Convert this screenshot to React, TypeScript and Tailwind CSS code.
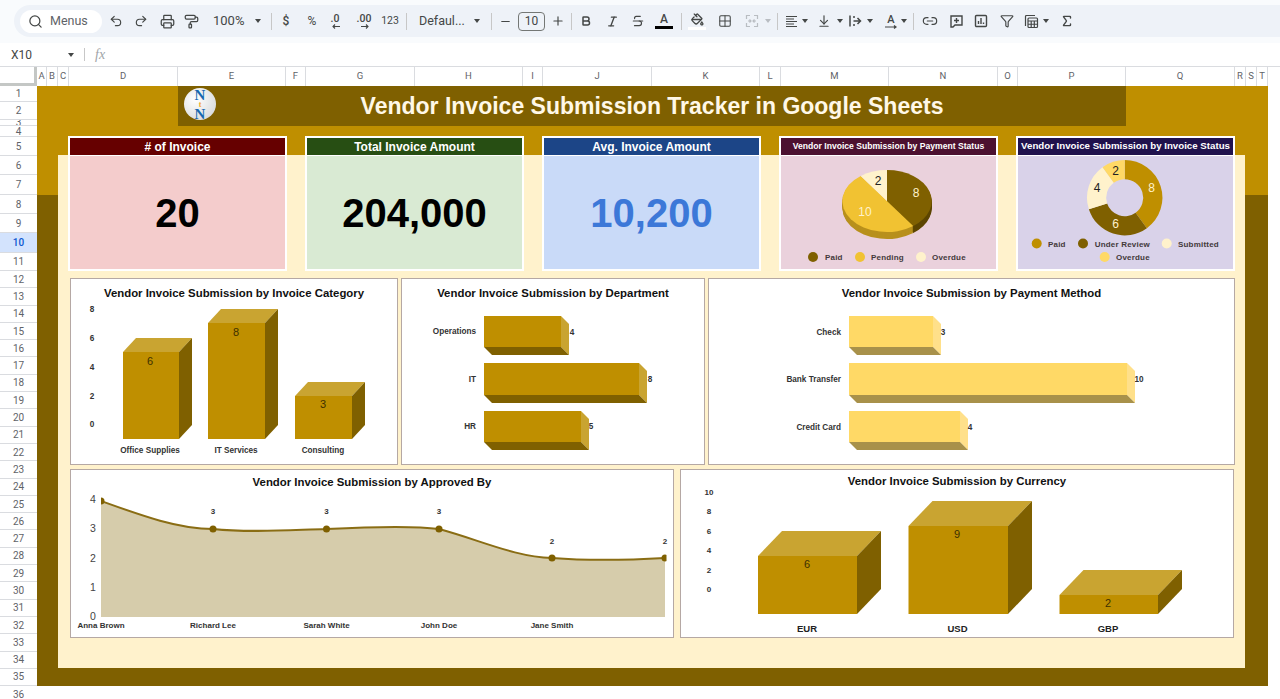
import React from 'react';
import {
  ArrowDownToLine,
  Bold,
  Filter,
  Grid2x2,
  Italic,
  Link2,
  Minus,
  PaintBucket,
  PaintRoller,
  Plus,
  Printer,
  Redo2,
  Search,
  Sigma,
  Strikethrough,
  Undo2,
} from 'lucide-react';

const columns = [
  { name: 'A', w: 'w-[10px]' },
  { name: 'B', w: 'w-[11px]' },
  { name: 'C', w: 'w-[11px]' },
  { name: 'D', w: 'w-[109px]' },
  { name: 'E', w: 'w-[108px]' },
  { name: 'F', w: 'w-[20px]' },
  { name: 'G', w: 'w-[109px]' },
  { name: 'H', w: 'w-[108px]' },
  { name: 'I', w: 'w-[20px]' },
  { name: 'J', w: 'w-[109px]' },
  { name: 'K', w: 'w-[108px]' },
  { name: 'L', w: 'w-[21px]' },
  { name: 'M', w: 'w-[108px]' },
  { name: 'N', w: 'w-[109px]' },
  { name: 'O', w: 'w-[20px]' },
  { name: 'P', w: 'w-[108px]' },
  { name: 'Q', w: 'w-[109px]' },
  { name: 'R', w: 'w-[11px]' },
  { name: 'S', w: 'w-[11px]' },
  { name: 'T', w: 'w-[11px]' },
];

const topRows = [
  'h-[16px]',
  'h-[18px]',
  'h-[6px]',
  'h-[11px]',
  'h-[19px]',
  'h-[19px]',
  'h-[20px]',
  'h-[19px]',
  'h-[19px]',
  'h-[20px]',
  'h-[18px]',
];

const Caret = ({ className = '' }: { className?: string }) => (
  <span className={`w-0 h-0 border-x-[3.5px] border-x-transparent border-t-[4px] border-t-[#444746] ${className}`} />
);

const Slot = ({ className = '', children }: { className?: string; children: React.ReactNode }) => (
  <div className={`w-6 h-6 flex items-center justify-center shrink-0 text-[#444746] ${className}`}>{children}</div>
);

const Sep = ({ className = '' }: { className?: string }) => (
  <div className={`w-px h-[17px] bg-[#c7c7c7] shrink-0 ${className}`} />
);

const Toolbar = () => (
  <div className="h-[43px] pt-[5px] pl-[14px] bg-[#f9fbfd]">
    <div className="h-8 flex items-center pl-[6px] bg-[#eef2f8] rounded-l-[16px] text-[#444746] font-['Roboto',sans-serif]">
      <div className="w-[82px] h-[23px] rounded-full bg-white flex items-center pl-[8px] shrink-0">
        <Search size={15} strokeWidth={2} />
        <span className="ml-[7px] text-[12.5px] text-[#5f6368]">Menus</span>
      </div>
      <Slot className="ml-[2px]"><Undo2 size={14} strokeWidth={2} /></Slot>
      <Slot className="ml-[1px]"><Redo2 size={14} strokeWidth={2} /></Slot>
      <Slot className="ml-[2px]"><Printer size={15} strokeWidth={2} /></Slot>
      <Slot><PaintRoller size={15} strokeWidth={2} /></Slot>
      <span className="ml-[10px] w-[42px] text-[13px]">100%</span>
      <Caret />
      <Sep className="ml-[10px]" />
      <Slot className="ml-[2px] text-[12px] font-medium">$</Slot>
      <Slot className="ml-[2px] text-[12px]">%</Slot>
      <Slot className="ml-[-1px] relative">
        <span className="text-[10.5px] font-medium mb-[5px]">.0</span>
        <svg className="absolute left-[9px] top-[15px]" width="8" height="5" viewBox="0 0 8 5" fill="none" stroke="currentColor" strokeWidth="1.1">
          <path d="M8 2.500H1M3 .5l-2 2 2 2" />
        </svg>
      </Slot>
      <Slot className="ml-[5px] relative">
        <span className="text-[10.5px] font-medium mb-[5px]">.00</span>
        <svg className="absolute left-[9px] top-[15px]" width="8" height="5" viewBox="0 0 8 5" fill="none" stroke="currentColor" strokeWidth="1.1">
          <path d="M0 2.500h7M5 .5l2 2-2 2" />
        </svg>
      </Slot>
      <Slot className="ml-[2px] text-[10.5px]">123</Slot>
      <Sep className="ml-[4px]" />
      <span className="ml-[12px] w-[52px] text-[12.5px] whitespace-nowrap">Defaul...</span>
      <Caret className="ml-[3px]" />
      <Sep className="ml-[11px]" />
      <Slot className="ml-[1px]"><Minus size={13} strokeWidth={2} /></Slot>
      <div className="ml-[1px] w-[27px] h-[19px] rounded-[4px] border border-[#747775] flex items-center justify-center text-[12px] shrink-0">10</div>
      <Slot className="ml-[1px]"><Plus size={14} strokeWidth={2} /></Slot>
      <Sep className="ml-[1px]" />
      <Slot className="ml-[2px]"><Bold size={12} strokeWidth={3} /></Slot>
      <Slot className="ml-[2px]"><Italic size={13} strokeWidth={2.5} /></Slot>
      <Slot className="ml-[2px]"><Strikethrough size={14} strokeWidth={2} /></Slot>
      <Slot className="ml-[2px] flex-col">
        <span className="text-[12px] leading-[13px] font-medium">A</span>
        <span className="w-[18px] h-[3px] bg-black" />
      </Slot>
      <Sep className="ml-[5px]" />
      <Slot className="ml-[3px] flex-col">
        <PaintBucket size={13} strokeWidth={2.4} />
        <span className="mt-[1px] w-[18px] h-[3px] bg-white" />
      </Slot>
      <Slot className="ml-[4px]"><Grid2x2 size={14} strokeWidth={1.8} /></Slot>
      <Slot className="ml-[3px] text-[#b9bdc2]">
        <svg width="14" height="14" viewBox="0 0 14 14" fill="none" stroke="currentColor" strokeWidth="1.2">
          <path d="M1.500 5V1.500H5M9 1.500h3.500V5M1.500 9v3.500H5M9 12.500h3.500V9M3 7h3M4.500 5.500 6 7 4.500 8.500M11 7H8M9.500 5.500 8 7l1.500 1.500" />
        </svg>
      </Slot>
      <span className="ml-[1px] w-0 h-0 border-x-[3.5px] border-x-transparent border-t-[4px] border-t-[#b9bdc2]" />
      <Sep className="ml-[6px]" />
      <Slot className="ml-[1px]">
        <svg width="13" height="13" viewBox="0 0 13 13" fill="none" stroke="currentColor" strokeWidth="1.1">
          <path d="M1 1.500h11M1 4h8M1 6.500h11M1 9h8M1 11.500h11" />
        </svg>
      </Slot>
      <Caret className="ml-[-1px]" />
      <Slot className="ml-[4px]"><ArrowDownToLine size={14} strokeWidth={2} /></Slot>
      <Caret className="ml-[1px]" />
      <Slot>
        <svg width="14" height="14" viewBox="0 0 14 14" fill="none" stroke="currentColor" strokeWidth="1.5">
          <path d="M2 1.500v11M5.500 7h7M9.500 4l3 3-3 3M6 2v2M6 10v2" />
        </svg>
      </Slot>
      <Caret />
      <Slot className="ml-[6px] flex-col">
        <span className="text-[11px] leading-[11px] font-medium">A</span>
        <svg width="14" height="4" viewBox="0 0 14 4" fill="none" stroke="currentColor" strokeWidth="1.2">
          <path d="M1 2h11M10 .5l2 1.500-2 1.500" />
        </svg>
      </Slot>
      <Caret className="ml-[-2px]" />
      <Sep className="ml-[6px]" />
      <Slot className="ml-[4px]"><Link2 size={16} strokeWidth={1.8} /></Slot>
      <Slot className="ml-[2px]">
        <svg width="15" height="15" viewBox="0 0 15 15" fill="none" stroke="currentColor" strokeWidth="1.4">
          <path d="M2 2h11v9H6l-2 2H2zM7.500 4v5M5 6.500h5" />
        </svg>
      </Slot>
      <Slot className="ml-[1px]">
        <svg width="14" height="14" viewBox="0 0 14 14" fill="none" stroke="currentColor" strokeWidth="1.4">
          <rect x="1.500" y="1.500" width="11" height="11" rx="1" />
          <path d="M4.500 10V7M7 10V4M9.500 10V8.500" />
        </svg>
      </Slot>
      <Slot className="ml-[2px]"><Filter size={14} strokeWidth={2} /></Slot>
      <Slot>
        <svg width="15" height="15" viewBox="0 0 15 15" fill="none" stroke="currentColor" strokeWidth="1.2">
          <path d="M1.500 12V2.500a1 1 0 0 1 1-1H11" />
          <rect x="4" y="4" width="9.500" height="9.500" rx="1" />
          <path d="M4 7h9.500M4 10.250h9.500M7.200 7v6.500M10.300 7v6.500" />
        </svg>
      </Slot>
      <Caret />
      <Slot className="ml-[6px]"><Sigma size={14} strokeWidth={2.4} /></Slot>
    </div>
  </div>
);

const FormulaBar = () => (
  <div className="h-[23px] flex items-center bg-white text-[#444746] font-['Roboto',sans-serif]">
    <span className="ml-[11px] w-[57px] text-[12px]">X10</span>
    <Caret />
    <div className="ml-[10px] w-px h-[13px] bg-[#c7c7c7]" />
    <span className="ml-[10px] font-['Liberation_Serif',serif] italic text-[14px] text-[#a0a4a8]">fx</span>
  </div>
);

const ColumnHeader = () => (
  <div className="h-[20px] flex bg-white border-t border-[#dadce0] text-[9.5px] text-[#5f6368] font-['Roboto',sans-serif]">
    <div className="w-[37px] h-full bg-white border-r-[3px] border-b-[3px] border-[#c4c7c5]" />
    {columns.map((col) => (
      <div key={col.name} className={`${col.w} flex items-center justify-center border-r border-[#dadce0]`}>
        {col.name}
      </div>
    ))}
  </div>
);

const RowHeader = () => {
  const extra = Array.from({ length: 25 }, (_, i) => i + 12);
  const cell = 'flex items-center justify-center border-b border-[#dadce0] overflow-hidden shrink-0';
  return (
    <div className="w-[37px] shrink-0 bg-white text-[10px] text-[#5f6368] font-['Roboto',sans-serif]">
      {topRows.map((h, i) => (
        <div key={i} className={`${h} ${cell} ${i === 9 ? 'bg-[#d3e3fd] text-[#0b57d0] font-medium' : ''}`}>
          {i + 1}
        </div>
      ))}
      {extra.map((n) => (
        <div key={n} className={`h-[17.3px] ${cell}`}>
          {n}
        </div>
      ))}
    </div>
  );
};

const Kpi = ({ title, value, head, body, valueClass }: { title: string; value: string; head: string; body: string; valueClass: string }) => (
  <div className="w-[219px] h-[135px] border-2 border-white flex flex-col bg-white">
    <div className={`h-[17px] flex items-center justify-center text-white text-[12px] font-bold ${head}`}>{title}</div>
    <div className={`mt-[1px] flex-1 flex items-center justify-center text-[40px] font-bold ${body} ${valueClass}`}>{value}</div>
  </div>
);

const slice = (cx: number, cy: number, rx: number, ry: number, from: number, to: number) => {
  const p = (a: number) => {
    const r = (a * Math.PI) / 180;
    return `${cx + rx * Math.sin(r)} ${cy - ry * Math.cos(r)}`;
  };
  return `M${cx} ${cy}L${p(from)}A${rx} ${ry} 0 ${to - from > 180 ? 1 : 0} 1 ${p(to)}Z`;
};

const ring = (cx: number, cy: number, r1: number, r2: number, from: number, to: number) => {
  const p = (a: number, r: number) => {
    const t = (a * Math.PI) / 180;
    return `${cx + r * Math.sin(t)} ${cy - r * Math.cos(t)}`;
  };
  const big = to - from > 180 ? 1 : 0;
  return `M${p(from, r1)}A${r1} ${r1} 0 ${big} 1 ${p(to, r1)}L${p(to, r2)}A${r2} ${r2} 0 ${big} 0 ${p(from, r2)}Z`;
};

const Legend = ({ x, y, tx, color, label }: { x: number; y: number; tx: number; color: string; label: string }) => (
  <g>
    <circle cx={x} cy={y} r="5" fill={color} />
    <text x={tx} y={y + 3} fontSize="8" fontWeight="700" fill="#43393a" letterSpacing=".2">
      {label}
    </text>
  </g>
);

const depth = [7, 6, 5, 4, 3, 2, 1];

const PieCard = () => (
  <div className="w-[219px] h-[135px] border-2 border-white flex flex-col bg-white">
    <div className="h-[17px] flex items-center justify-center text-white text-[8.6px] font-bold bg-[#4c1130] whitespace-nowrap">
      Vendor Invoice Submission by Payment Status
    </div>
    <svg className="mt-[1px] block bg-[#ead1dc]" width="215" height="113" viewBox="782 156 215 113">
      {depth.map((d) => (
        <g key={d}>
          <path d={slice(888, 201 + d, 44.7, 31, 0, 144)} fill="#5c4500" />
          <path d={slice(888, 201 + d, 44.7, 31, 144, 324)} fill="#b8901c" />
        </g>
      ))}
      <path d={slice(888, 201, 44.7, 31, 0, 144)} fill="#7f6000" />
      <path d={slice(888, 201, 44.7, 31, 144, 324)} fill="#f1c232" />
      <path d={slice(888, 201, 44.7, 31, 324, 360)} fill="#fff2cc" />
      <text x="917" y="197" textAnchor="middle" fontSize="12" fill="#fff2cc">8</text>
      <text x="866" y="216" textAnchor="middle" fontSize="12" fill="#fff2cc">10</text>
      <text x="879" y="185" textAnchor="middle" fontSize="12" fill="#222">2</text>
      <Legend x={814} y={257} tx={826} color="#7f6000" label="Paid" />
      <Legend x={861} y={257} tx={872} color="#f1c232" label="Pending" />
      <Legend x={922} y={257} tx={933} color="#fff2cc" label="Overdue" />
    </svg>
  </div>
);

const DonutCard = () => (
  <div className="w-[219px] h-[135px] border-2 border-white flex flex-col bg-white">
    <div className="h-[17px] flex items-center justify-center text-white text-[9.7px] font-bold bg-[#20124d] whitespace-nowrap">
      Vendor Invoice Submission by Invoice Status
    </div>
    <svg className="mt-[1px] block bg-[#d9d2e9]" width="215" height="113" viewBox="1019 156 215 113">
      <path d={ring(1125.7, 197.7, 37.7, 18.5, 0, 144)} fill="#bf8f00" />
      <path d={ring(1125.7, 197.7, 37.7, 18.5, 144, 252)} fill="#7f6000" />
      <path d={ring(1125.7, 197.7, 37.7, 18.5, 252, 324)} fill="#fff2cc" />
      <path d={ring(1125.7, 197.7, 37.7, 18.5, 324, 360)} fill="#ffd966" />
      <text x="1152.700" y="192" textAnchor="middle" fontSize="12" fill="#fff2cc">8</text>
      <text x="1116.700" y="228" textAnchor="middle" fontSize="12" fill="#fff2cc">6</text>
      <text x="1098" y="192" textAnchor="middle" fontSize="12" fill="#222">4</text>
      <text x="1116.700" y="175" textAnchor="middle" fontSize="12" fill="#222">2</text>
      <Legend x={1037.700} y={243.500} tx={1049} color="#bf8f00" label="Paid" />
      <Legend x={1084} y={243.500} tx={1095.700} color="#7f6000" label="Under Review" />
      <Legend x={1167.700} y={243.500} tx={1179} color="#fff2cc" label="Submitted" />
      <Legend x={1105.700} y={257} tx={1117} color="#ffd966" label="Overdue" />
    </svg>
  </div>
);

const Column3D = ({ x, y, w, bottom, dx, dy }: { x: number; y: number; w: number; bottom: number; dx: number; dy: number }) => (
  <g>
    <polygon points={`${x},${y} ${x + dx},${y - dy} ${x + w + dx},${y - dy} ${x + w},${y}`} fill="#c9a431" />
    <polygon points={`${x + w},${y} ${x + w + dx},${y - dy} ${x + w + dx},${bottom - dy} ${x + w},${bottom}`} fill="#7f6000" />
    <rect x={x} y={y} width={w} height={bottom - y} fill="#bf8f00" />
  </g>
);

const HBar = ({ x, y, w, h, front, side, under }: { x: number; y: number; w: number; h: number; front: string; side: string; under: string }) => (
  <g>
    <polygon points={`${x + w},${y} ${x + w + 8},${y + 8} ${x + w + 8},${y + h + 8} ${x + w},${y + h}`} fill={side} />
    <polygon points={`${x},${y + h} ${x + 8},${y + h + 8} ${x + w + 8},${y + h + 8} ${x + w},${y + h}`} fill={under} />
    <rect x={x} y={y} width={w} height={h} fill={front} />
  </g>
);

const Card = ({ title, w, h, head, children }: { title: string; w: string; h: string; head: string; children: React.ReactNode }) => (
  <div className={`${w} ${h} bg-white border border-[#b5a8a4] flex flex-col shrink-0`}>
    <div className={`${head} flex items-center justify-center font-bold text-[#111] text-[11.4px] shrink-0`}>{title}</div>
    {children}
  </div>
);

const CategoryChart = () => (
  <svg width="326" height="160" viewBox="71 304 326 160" className="block">
    {[['8', 309], ['6', 338], ['4', 367], ['2', 396], ['0', 424]].map(([t, y]) => (
      <text key={t} x="92" y={Number(y) + 3} textAnchor="middle" fontSize="8.200" fontWeight="700" fill="#333">{t}</text>
    ))}
    <Column3D x={123} y={352} w={56} bottom={439} dx={13} dy={14} />
    <Column3D x={208} y={323} w={57} bottom={439} dx={13} dy={14} />
    <Column3D x={295} y={396} w={57} bottom={439} dx={13} dy={14} />
    <text x="150" y="365" textAnchor="middle" fontSize="11" fill="#3d3000">6</text>
    <text x="236" y="336" textAnchor="middle" fontSize="11" fill="#3d3000">8</text>
    <text x="323" y="408" textAnchor="middle" fontSize="11" fill="#3d3000">3</text>
    <text x="150" y="453" textAnchor="middle" fontSize="8.200" fontWeight="700" fill="#333">Office Supplies</text>
    <text x="236" y="453" textAnchor="middle" fontSize="8.200" fontWeight="700" fill="#333">IT Services</text>
    <text x="323" y="453" textAnchor="middle" fontSize="8.200" fontWeight="700" fill="#333">Consulting</text>
  </svg>
);

const DepartmentChart = () => (
  <svg width="302" height="160" viewBox="402 304 302 160" className="block">
    <HBar x={484} y={316} w={77} h={31} front="#bf8f00" side="#c9a431" under="#7f6000" />
    <HBar x={484} y={363} w={155} h={32} front="#bf8f00" side="#c9a431" under="#7f6000" />
    <HBar x={484} y={411} w={97} h={31} front="#bf8f00" side="#c9a431" under="#7f6000" />
    <g fontSize="8.200" fontWeight="700" fill="#333">
      <text x="476" y="334" textAnchor="end">Operations</text>
      <text x="476" y="382" textAnchor="end">IT</text>
      <text x="476" y="429" textAnchor="end">HR</text>
      <text x="572" y="335" textAnchor="middle">4</text>
      <text x="650" y="382" textAnchor="middle">8</text>
      <text x="591" y="429" textAnchor="middle">5</text>
    </g>
  </svg>
);

const MethodChart = () => (
  <svg width="525" height="160" viewBox="709 304 525 160" className="block">
    <HBar x={849} y={316} w={84} h={31} front="#ffd966" side="#ffe08a" under="#a8914a" />
    <HBar x={849} y={363} w={278} h={32} front="#ffd966" side="#ffe08a" under="#a8914a" />
    <HBar x={849} y={411} w={111} h={31} front="#ffd966" side="#ffe08a" under="#a8914a" />
    <g fontSize="8.200" fontWeight="700" fill="#333">
      <text x="841" y="335" textAnchor="end">Check</text>
      <text x="841" y="382" textAnchor="end">Bank Transfer</text>
      <text x="841" y="430" textAnchor="end">Credit Card</text>
      <text x="943" y="335" textAnchor="middle">3</text>
      <text x="1139" y="382" textAnchor="middle">10</text>
      <text x="970" y="430" textAnchor="middle">4</text>
    </g>
  </svg>
);

const linePath = 'M101 501C140 515 178 529 213 529C250 533 290 530 326.500 529C365 527 410 525 439 529C480 540 515 557 552 558C590 561 630 560 665 558';

const ApprovedChart = () => (
  <svg width="602" height="143" viewBox="71 494 602 143" className="block">
    <defs>
      <clipPath id="plot-area">
        <rect x="101" y="490" width="565.500" height="130" />
      </clipPath>
    </defs>
    <path d={`${linePath}V617H101Z`} fill="#d6ccab" />
    <g clipPath="url(#plot-area)">
      <path d={linePath} fill="none" stroke="#8a6d14" strokeWidth="2" />
      {[[101, 501], [213, 529], [326.5, 529], [439, 529], [552, 558], [665, 558]].map(([x, y]) => (
        <circle key={x} cx={x} cy={y} r="3.500" fill="#7f6000" />
      ))}
    </g>
    {[['4', 503], ['3', 532], ['2', 562], ['1', 591], ['0', 620]].map(([t, y]) => (
      <text key={t} x="93" y={y} textAnchor="middle" fontSize="10.500" fill="#444">{t}</text>
    ))}
    <g fontSize="8" fontWeight="700" fill="#333" textAnchor="middle">
      <text x="213" y="514">3</text>
      <text x="326.500" y="514">3</text>
      <text x="439" y="514">3</text>
      <text x="552" y="544">2</text>
      <text x="665" y="544">2</text>
      <text x="101" y="628">Anna Brown</text>
      <text x="213" y="628">Richard Lee</text>
      <text x="326.500" y="628">Sarah White</text>
      <text x="439" y="628">John Doe</text>
      <text x="552" y="628">Jane Smith</text>
    </g>
  </svg>
);

const CurrencyChart = () => (
  <svg width="552" height="145" viewBox="681 492 552 145" className="block overflow-visible">
    <Column3D x={758} y={556} w={99} bottom={614} dx={24} dy={25} />
    <Column3D x={908.500} y={526} w={99.500} bottom={614} dx={24} dy={25} />
    <Column3D x={1059.500} y={595} w={98.500} bottom={614} dx={24} dy={25} />
    <g fontSize="8" fontWeight="700" fill="#333" textAnchor="middle">
      <text x="709" y="495">10</text>
      <text x="709" y="514">8</text>
      <text x="709" y="534">6</text>
      <text x="709" y="553">4</text>
      <text x="709" y="573">2</text>
      <text x="709" y="592">0</text>
    </g>
    <text x="807" y="568" textAnchor="middle" fontSize="11" fill="#3d3000">6</text>
    <text x="957" y="538" textAnchor="middle" fontSize="11" fill="#3d3000">9</text>
    <text x="1108" y="607" textAnchor="middle" fontSize="11" fill="#3d3000">2</text>
    <g fontSize="9.500" fontWeight="700" fill="#222" textAnchor="middle">
      <text x="807" y="632">EUR</text>
      <text x="957.500" y="632">USD</text>
      <text x="1108" y="632">GBP</text>
    </g>
  </svg>
);

const Logo = () => (
  <div className="w-8 h-8 rounded-full bg-[radial-gradient(circle_at_35%_35%,#ffffff,#cfd2d4)] flex flex-col items-center justify-center font-['Liberation_Serif',serif] font-bold text-[#1668b0] leading-none">
    <span className="text-[15px] leading-[12px]">N</span>
    <span className="text-[8px] leading-[7px] text-[#f1a92b]">t</span>
    <span className="text-[15px] leading-[12px]">N</span>
  </div>
);

const Dashboard = () => (
  <div className="w-[1231px] h-[600px] shrink-0 bg-[linear-gradient(#bf8f00_109px,#7f6000_109px)] font-['Liberation_Sans',Arial,sans-serif]">
    <div className="ml-[141px] w-[948px] h-10 bg-[#7f6000] relative flex items-center justify-center">
      <div className="absolute left-[6px] top-[2px]"><Logo /></div>
      <h1 className="text-[23px] font-bold text-[#fff8e7]">Vendor Invoice Submission Tracker in Google Sheets</h1>
    </div>
    <div className="mt-[29px] ml-[21px] w-[1187px] h-[513px] bg-[#fff2cc] flex flex-col">
      <div className="-mt-[19px] ml-[10px] w-[1167px] flex justify-between">
        <Kpi title="# of Invoice" value="20" head="bg-[#660000]" body="bg-[#f4cccc]" valueClass="text-black" />
        <Kpi title="Total Invoice Amount" value="204,000" head="bg-[#274e13]" body="bg-[#d9ead3]" valueClass="text-black" />
        <Kpi title="Avg. Invoice Amount" value="10,200" head="bg-[#1c4587]" body="bg-[#c9daf8]" valueClass="text-[#3c78d8]" />
        <PieCard />
        <DonutCard />
      </div>
      <div className="mt-[7px] ml-[12px] flex gap-[3px]">
        <Card title="Vendor Invoice Submission by Invoice Category" w="w-[328px]" h="h-[187px]" head="h-[25px] pt-[5px]"><CategoryChart /></Card>
        <Card title="Vendor Invoice Submission by Department" w="w-[304px]" h="h-[187px]" head="h-[25px] pt-[5px]"><DepartmentChart /></Card>
        <Card title="Vendor Invoice Submission by Payment Method" w="w-[527px]" h="h-[187px]" head="h-[25px] pt-[5px]"><MethodChart /></Card>
      </div>
      <div className="mt-[4px] ml-[12px] flex gap-[6px]">
        <Card title="Vendor Invoice Submission by Approved By" w="w-[604px]" h="h-[169px]" head="h-[24px] pt-[2px]"><ApprovedChart /></Card>
        <Card title="Vendor Invoice Submission by Currency" w="w-[554px]" h="h-[169px]" head="h-[22px] pt-[2px]"><CurrencyChart /></Card>
      </div>
    </div>
  </div>
);

export default function App() {
  return (
    <div className="w-[1280px] h-[699px] overflow-hidden bg-white flex flex-col">
      <Toolbar />
      <FormulaBar />
      <ColumnHeader />
      <div className="flex flex-1 min-h-0">
        <RowHeader />
        <Dashboard />
      </div>
    </div>
  );
}
